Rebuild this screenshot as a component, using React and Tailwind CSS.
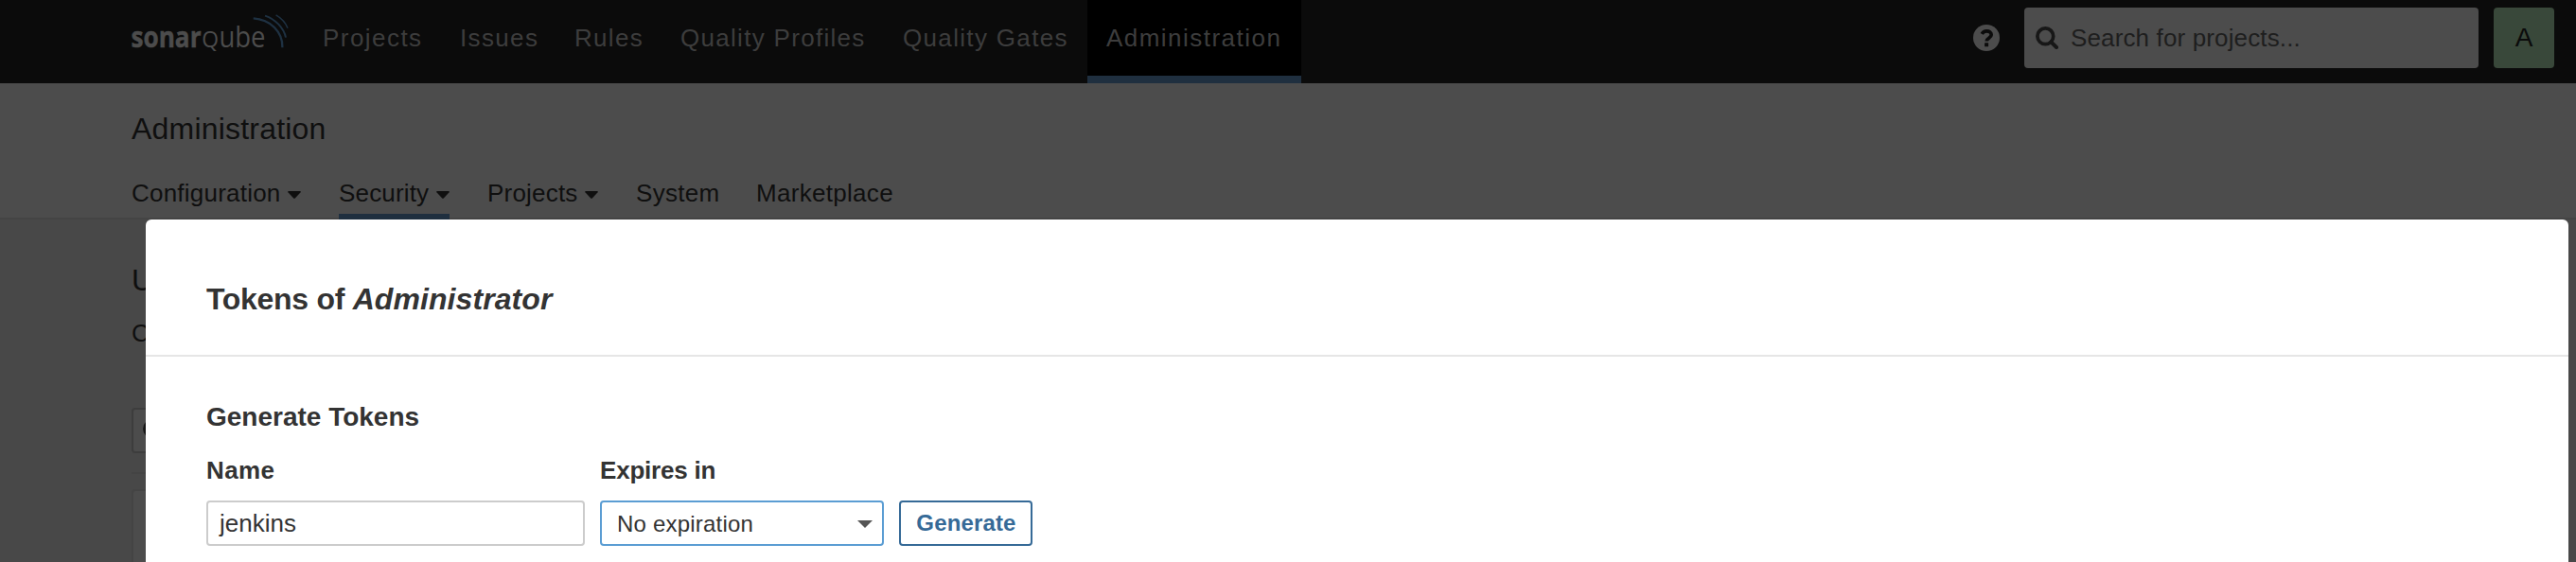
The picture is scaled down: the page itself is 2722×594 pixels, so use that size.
const navItems = [
  { label: "Projects", box: "w-[145px] tracking-[1.45px]" },
  { label: "Issues", box: "w-[121px] tracking-[1.35px]" },
  { label: "Rules", box: "w-[112px] tracking-[1.3px]" },
  { label: "Quality Profiles", box: "w-[235px] tracking-[1.3px]" },
  { label: "Quality Gates", box: "w-[215px] tracking-[1.33px]" },
  { label: "Administration", box: "w-[226px] tracking-[1.47px]", active: true },
];

const tabs = [
  { label: "Configuration", box: "w-[179px] tracking-[0.22px]", caret: true },
  { label: "Security", box: "ml-10 w-[117px] tracking-[0.17px]", caret: true, active: true },
  { label: "Projects", box: "ml-[40px] w-[117px] tracking-[0.2px]", caret: true },
  { label: "System", box: "ml-[40px] w-[87px] tracking-[0.3px]" },
  { label: "Marketplace", box: "ml-[40px] w-[146px] tracking-[0.3px]" },
];

function Logo() {
  return (
    <svg className="h-[88px] w-[183px] shrink-0" viewBox="138 0 183 88" fill="#4c4c4c">
      <text x="138.4" y="50.4" fontFamily="Open Sans" fontWeight="700" fontSize="30.5" textLength="74.2" lengthAdjust="spacingAndGlyphs" stroke="#4c4c4c" strokeWidth="0.5">sonar</text>
      <text x="213.2" y="50.4" fontFamily="Open Sans" fontWeight="400" fontSize="23.4" textLength="17.8" lengthAdjust="spacingAndGlyphs">Q</text>
      <text x="231.4" y="50.4" fontFamily="Open Sans" fontWeight="400" fontSize="30.5" textLength="49.2" lengthAdjust="spacingAndGlyphs">ube</text>
      <g fill="none" stroke="#1e3142">
        <path d="M267.7 19.4C285.5 20.5 299 33.5 298.4 50.2" strokeWidth="2.3" />
        <path d="M280 16.6C291 20.2 299.8 29.5 302 39.6" strokeWidth="2" />
        <path d="M291.6 15.9C297.3 19.2 301.8 24 304 29.8" strokeWidth="1.5" />
      </g>
    </svg>
  );
}

function SearchIcon({ className }) {
  return (
    <svg className={className} viewBox="0 0 24 24" fill="none" stroke="#171717">
      <circle cx="10.3" cy="10.3" r="8.4" strokeWidth="3.7" />
      <path d="M16.3 16.3L22 22" strokeWidth="4" strokeLinecap="round" />
    </svg>
  );
}

function TabCaret() {
  return (
    <svg className="mt-[4px] h-2 w-[14px]" viewBox="0 0 14 8" fill="#0f0f0f">
      <path d="M1 0H13Q14.3 0.2 13.6 1.3L7.8 7.5Q7 8.2 6.2 7.5L0.4 1.3Q-0.3 0.2 1 0Z" />
    </svg>
  );
}

function Navbar() {
  return (
    <nav className="flex h-[88px] bg-[#0b0b0b] pr-[23px] pl-[138px]">
      <Logo />
      <ul className="flex text-[26px] leading-[80px] whitespace-nowrap text-[#3d3d3d]">
        {navItems.map((n) => (
          <li
            key={n.label}
            className={`${n.box} h-[88px] pl-5 ${n.active ? "border-b-8 border-[#1f2f3f] bg-black" : ""}`}
          >
            {n.label}
          </li>
        ))}
      </ul>
      <div className="ml-auto flex h-20 items-center">
        <svg className="mr-[26px] h-7 w-7" viewBox="0 0 28 28">
          <circle cx="14" cy="14" r="14" fill="#4c4c4c" />
          <path d="M9.2 9.8C10.4 7.7 12 6.8 14.2 6.8C17 6.8 19.2 8.4 19.2 10.8C19.2 14.2 14.2 14.2 14.2 17.4" fill="none" stroke="#0b0b0b" strokeWidth="3.7" />
          <rect x="12.1" y="19.3" width="4" height="3.9" rx="0.5" fill="#0b0b0b" />
        </svg>
        <div className="flex h-16 w-[480px] items-center rounded bg-[#4c4c4c] pl-3">
          <SearchIcon className="h-6 w-6" />
          <span className="ml-[13px] text-[26px] tracking-[0.14px] text-[#1e1e1e]">Search for projects...</span>
        </div>
        <div className="ml-4 flex h-16 w-16 items-center justify-center rounded bg-[#39483a] text-[28px] text-[#0b0b0b]">A</div>
      </div>
    </nav>
  );
}

function PageHeader() {
  return (
    <header className="h-36 border-b-2 border-[#444444] bg-[#4c4c4c] pt-7 pl-[139px] whitespace-nowrap">
      <h1 className="text-[32px] leading-10 tracking-[0.2px]">Administration</h1>
      <ul className="mt-[26px] flex text-[26px] leading-[44px]">
        {tabs.map((t) => (
          <li
            key={t.label}
            className={`${t.box} flex h-[50px] justify-between ${t.active ? "border-b-[6px] border-[#1f2f3f]" : "border-b-[6px] border-transparent"}`}
          >
            <span>{t.label}</span>
            {t.caret && (
              <span className="flex h-11 items-center">
                <TabCaret />
              </span>
            )}
          </li>
        ))}
      </ul>
    </header>
  );
}

function TokensModal() {
  return (
    <section className="absolute top-[232px] left-[154px] h-[362px] w-[2560px] rounded-t-md bg-white text-[#333333]">
      <div className="h-[145px] border-b-2 border-[#e6e6e6] pt-16 pl-16">
        <h2 className="text-[32px] leading-10 font-bold">
          <span className="tracking-[-0.3px]">Tokens of </span>
          <em className="tracking-[0.08px]">Administrator</em>
        </h2>
      </div>
      <div className="pt-11 pl-16">
        <h3 className="text-[28px] leading-10 font-bold">Generate Tokens</h3>
        <div className="mt-5 flex gap-4 text-[26px]">
          <div className="w-[400px]">
            <div className="leading-8 font-bold tracking-[0.4px]">Name</div>
            <div className="mt-4 flex h-12 items-center rounded border-2 border-[#cccccc] pl-[12px]">jenkins</div>
          </div>
          <div className="w-[300px]">
            <div className="leading-8 font-bold tracking-[-0.2px]">Expires in</div>
            <div className="mt-4 flex h-12 items-center justify-between rounded border-2 border-[#5b9dd3] pr-[10px] pl-[16px] text-[24px] tracking-[0.2px]">
              <span className="pt-[2px]">No expiration</span>
              <svg className="mt-0.5 h-2 w-4" viewBox="0 0 16 8" fill="#555555">
                <path d="M0 0H16L8 8Z" />
              </svg>
            </div>
          </div>
          <button className="mt-12 flex h-12 w-[141px] items-center justify-center rounded border-2 border-[#366a97] pl-px text-[24px] font-bold tracking-[0.15px] text-[#366a97]">
            Generate
          </button>
        </div>
      </div>
    </section>
  );
}

export default function App() {
  return (
    <div className="relative h-[594px] w-full overflow-hidden bg-[#484848] font-['Liberation_Sans',Arial,sans-serif] text-[#0f0f0f]">
      <Navbar />
      <PageHeader />
      <main className="pt-11 pr-[23px] pl-[139px]">
        <h2 className="text-[32px] leading-10">U</h2>
        <p className="mt-5 text-[26px] leading-8">C</p>
        <div className="mt-[63px] flex h-12 w-[600px] items-center rounded border-2 border-[#3d3d3d] bg-[#4c4c4c] pl-[10px]">
          <SearchIcon className="h-6 w-6" />
        </div>
        <div className="mt-5 h-0.5 bg-[#444444]" />
        <div className="mt-4 h-40 rounded border-2 border-[#444444] bg-[#4c4c4c]" />
      </main>
      <TokensModal />
    </div>
  );
}
